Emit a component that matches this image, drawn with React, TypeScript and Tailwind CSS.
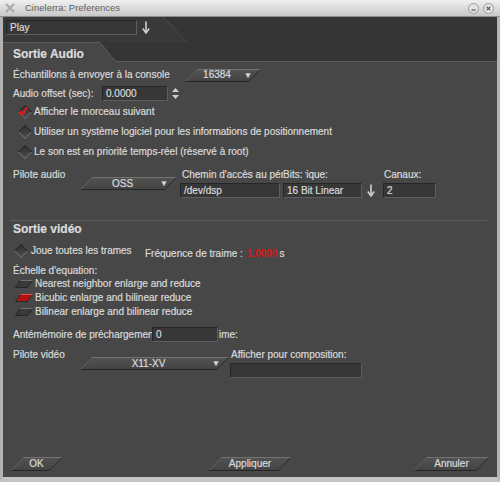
import React from 'react';

const inputCls =
  'flex h-[15px] shrink-0 items-center border border-t-[#262626] border-l-[#262626] border-b-[#5e5e5e] border-r-[#5e5e5e] bg-[#373737] px-[3px] whitespace-nowrap';

function DownArrow({ className = '' }: { className?: string }) {
  return (
    <svg className={`shrink-0 ${className}`} width="8" height="13" viewBox="0 0 8 13">
      <path d="M4 0.5V11" stroke="#d0d0d0" strokeWidth="1.6" />
      <path d="M0.8 7.5L4 12L7.2 7.5" stroke="#d0d0d0" strokeWidth="1.6" fill="none" />
    </svg>
  );
}

function Slanted({
  className = '',
  children,
  arrow = false,
}: {
  className?: string;
  children: React.ReactNode;
  arrow?: boolean;
}) {
  return (
    <div className={`relative shrink-0 ${className}`}>
      <div className="absolute inset-0 -skew-x-[44deg] border border-t-[#737373] border-l-[#646464] border-b-[#262626] border-r-[#2c2c2c] bg-gradient-to-b from-[#525252] to-[#444444]" />
      <div className={`relative flex h-full items-center justify-center ${arrow ? 'pr-[12px]' : ''}`}>
        {children}
      </div>
      {arrow && (
        <span className="absolute right-[3px] top-[1px] text-[8px] leading-[11px] text-[#d8d8d8]">▼</span>
      )}
    </div>
  );
}

function Diamond({ checked = false, className = '' }: { checked?: boolean; className?: string }) {
  return (
    <div className={`relative h-[15px] w-[15px] shrink-0 ${className}`}>
      <div className="absolute left-[2.5px] top-[2.5px] h-[10px] w-[10px] rotate-45 border border-t-[#262626] border-l-[#262626] border-b-[#6a6a6a] border-r-[#6a6a6a] bg-gradient-to-br from-[#333333] to-[#4a4a4a]" />
      {checked && (
        <svg className="absolute left-0 top-0" width="15" height="15" viewBox="0 0 15 15">
          <path d="M2.5 6.5L5 9.5L10 2.5" stroke="#d81c1c" strokeWidth="2.4" fill="none" />
        </svg>
      )}
    </div>
  );
}

function Radio({ on = false }: { on?: boolean }) {
  return (
    <svg className="ml-[12px] shrink-0" width="18" height="8" viewBox="0 0 18 8">
      <polygon points="5.5,0.5 17.5,0.5 12.5,7.5 0.5,7.5" fill={on ? '#b31212' : '#3a3a3a'} stroke="#262626" />
      <path d="M5.5 0.5H17.5" stroke={on ? '#e05050' : '#707070'} />
    </svg>
  );
}

export default function App() {
  return (
    <div className="flex h-[482px] w-[500px] flex-col overflow-hidden bg-[#474747] font-['Liberation_Sans',Arial,sans-serif] text-[10px] leading-[12px] text-[#dadada] [-webkit-text-stroke:0.2px_#dadada]">
      {/* title bar */}
      <div className="flex h-[17px] shrink-0 items-center border-b border-[#8c8c8c] bg-gradient-to-b from-[#f0f0f0] to-[#c8c8c8] [-webkit-text-stroke:0px]">
        <svg className="ml-[5px]" width="10" height="10" viewBox="0 0 10 10">
          <path d="M1 1L9 9M9 1L1 9" stroke="#a9a9a9" strokeWidth="2" />
        </svg>
        <span className="ml-[10px] text-[9.5px] leading-none text-[#5e5e5e]">Cinelerra: Preferences</span>
        <div className="ml-auto mr-[6px] flex gap-[4px]">
          <svg width="11" height="11" viewBox="0 0 11 11">
            <circle cx="5.5" cy="5.5" r="5" fill="#e2e2e2" stroke="#9a9a9a" />
            <path d="M3.5 7H7.5" stroke="#555" strokeWidth="1.2" />
          </svg>
          <svg width="11" height="11" viewBox="0 0 11 11">
            <circle cx="5.5" cy="5.5" r="5" fill="#e2e2e2" stroke="#9a9a9a" />
            <path d="M3.8 3.8L7.2 7.2M7.2 3.8L3.8 7.2" stroke="#555" strokeWidth="1.2" />
          </svg>
        </div>
      </div>

      <div className="flex min-h-0 flex-1 border-x-[3px] border-b-[5px] border-x-[#b4b4b4] border-b-[#c4c4c4]">
        <div className="flex min-w-0 flex-1 flex-col">
          {/* top band */}
          <div className="relative h-[25px] shrink-0 bg-[#353535]">
            <svg className="absolute inset-0" width="494" height="25" viewBox="0 0 494 25">
              <polygon points="0,0 160,0 184,25 0,25" fill="#393939" />
              <line x1="160" y1="0" x2="184" y2="25" stroke="#4c4c4c" />
            </svg>
            <div className="relative flex items-start pl-[3px] pt-[3px]">
              <div className={`${inputCls} w-[131px]`}>Play</div>
              <DownArrow className="ml-[5px] mt-[1px]" />
            </div>
          </div>

          {/* tab row */}
          <div className="flex h-[20px] shrink-0">
            <div className="w-[97px] shrink-0 border-t border-[#5c5c5c] bg-[#474747] pl-[10px] pt-[4px] text-[12px] font-bold leading-[14px] text-[#dcdcdc]">
              Sortie Audio
            </div>
            <svg className="shrink-0" width="16" height="20" viewBox="0 0 16 20">
              <rect width="16" height="20" fill="#353535" />
              <polygon points="0,0 16,20 0,20" fill="#474747" />
              <line x1="0" y1="0.5" x2="16" y2="20" stroke="#5c5c5c" />
            </svg>
            <div className="flex-1 border-b border-[#5c5c5c] bg-[#353535]" />
          </div>

          {/* audio section */}
          <div className="mt-[6px] flex h-[14px] items-center">
            <div className="ml-[10px] w-[178px] shrink-0 whitespace-nowrap">Échantillons à envoyer à la console</div>
            <Slanted className="h-[13px] w-[64px]" arrow>
              16384
            </Slanted>
          </div>

          <div className="mt-[4px] flex h-[15px] items-center">
            <div className="ml-[10px] w-[89px] shrink-0 whitespace-nowrap">Audio offset (sec):</div>
            <div className={`${inputCls} w-[66px]`}>0.0000</div>
            <svg className="ml-[4px] shrink-0" width="7" height="11" viewBox="0 0 7 11">
              <polygon points="3.5,0 7,4 0,4" fill="#cfcfcf" />
              <polygon points="0,7 7,7 3.5,11" fill="#cfcfcf" />
            </svg>
          </div>

          <div className="mt-[1px] flex h-[20px] items-center">
            <Diamond checked className="ml-[14px]" />
            <span className="ml-[2px] whitespace-nowrap">Afficher le morceau suivant</span>
          </div>
          <div className="flex h-[20px] items-center">
            <Diamond className="ml-[14px]" />
            <span className="ml-[2px] whitespace-nowrap">
              Utiliser un système logiciel pour les informations de positionnement
            </span>
          </div>
          <div className="flex h-[20px] items-center">
            <Diamond className="ml-[14px]" />
            <span className="ml-[2px] whitespace-nowrap">Le son est en priorité temps-réel (réservé à root)</span>
          </div>

          <div className="mt-[7px] flex items-start">
            <div className="ml-[10px] w-[73px] shrink-0 whitespace-nowrap">Pilote audio</div>
            <Slanted className="mt-[8px] h-[13px] w-[85px]" arrow>
              OSS
            </Slanted>
            <div className="ml-[9px] flex w-[100px] shrink-0 flex-col">
              <div className="ml-[2px] whitespace-nowrap">Chemin d'accès au périphérique:</div>
              <div className={`${inputCls} mt-[2px] w-[100px]`}>/dev/dsp</div>
            </div>
            <div className="ml-[3px] flex shrink-0 flex-col">
              <div className="relative w-fit bg-[#474747] pr-[3px]">Bits:</div>
              <div className="mt-[2px] flex items-center">
                <div className={`${inputCls} w-[79px]`}>16 Bit Linear</div>
                <DownArrow className="ml-[5px]" />
              </div>
            </div>
            <div className="ml-[8px] flex shrink-0 flex-col">
              <div className="ml-[1px]">Canaux:</div>
              <div className={`${inputCls} mt-[2px] w-[53px]`}>2</div>
            </div>
          </div>

          <div className="ml-[7px] mr-[10px] mt-[22px] h-[1px] shrink-0 bg-[#5e5e5e]" />

          {/* video section */}
          <div className="ml-[10px] mt-[1px] text-[12px] font-bold leading-[14px] text-[#dcdcdc]">Sortie vidéo</div>

          <div className="mt-[7px] flex h-[16px] items-center">
            <div className="flex w-[142px] shrink-0 items-center">
              <Diamond className="ml-[10px]" />
              <span className="ml-[3px] whitespace-nowrap">Joue toutes les trames</span>
            </div>
            <span className="mt-[5px] whitespace-nowrap">
              Fréquence de traime :
              <span className="ml-[4px] font-bold text-[#d41818] [-webkit-text-stroke:0px]">1.0000</span>
              <span className="ml-[2px]">s</span>
            </span>
          </div>

          <div className="ml-[10px] mt-[6px] h-[12px] whitespace-nowrap">Échelle d'equation:</div>

          <div className="flex h-[14px] items-center">
            <Radio />
            <span className="ml-[2px] whitespace-nowrap">Nearest neighbor enlarge and reduce</span>
          </div>
          <div className="flex h-[14px] items-center">
            <Radio on />
            <span className="ml-[2px] whitespace-nowrap">Bicubic enlarge and bilinear reduce</span>
          </div>
          <div className="flex h-[14px] items-center">
            <Radio />
            <span className="ml-[2px] whitespace-nowrap">Bilinear enlarge and bilinear reduce</span>
          </div>

          <div className="mt-[8px] flex h-[15px] items-center">
            <div className="ml-[10px] w-[139px] shrink-0 overflow-hidden whitespace-nowrap">
              Antémémoire de préchargement
            </div>
            <div className={`${inputCls} w-[66px]`}>0</div>
            <span className="ml-[1px]">ime:</span>
          </div>

          <div className="mt-[7px] flex items-start">
            <div className="ml-[10px] w-[73px] shrink-0 whitespace-nowrap">Pilote vidéo</div>
            <Slanted className="mt-[8px] h-[13px] w-[137px]" arrow>
              X11-XV
            </Slanted>
            <div className="ml-[7px] flex shrink-0 flex-col">
              <div className="ml-[1px] whitespace-nowrap">Afficher pour composition:</div>
              <div className={`${inputCls} mt-[2px] w-[132px]`} />
            </div>
          </div>

          {/* buttons */}
          <div className="mb-[6px] mt-auto flex h-[14px] shrink-0">
            <Slanted className="ml-[14px] h-[14px] w-[39px]">OK</Slanted>
            <Slanted className="ml-[159px] h-[14px] w-[70px]">Appliquer</Slanted>
            <Slanted className="ml-[135px] h-[14px] w-[63px]">Annuler</Slanted>
          </div>
        </div>
      </div>
    </div>
  );
}
